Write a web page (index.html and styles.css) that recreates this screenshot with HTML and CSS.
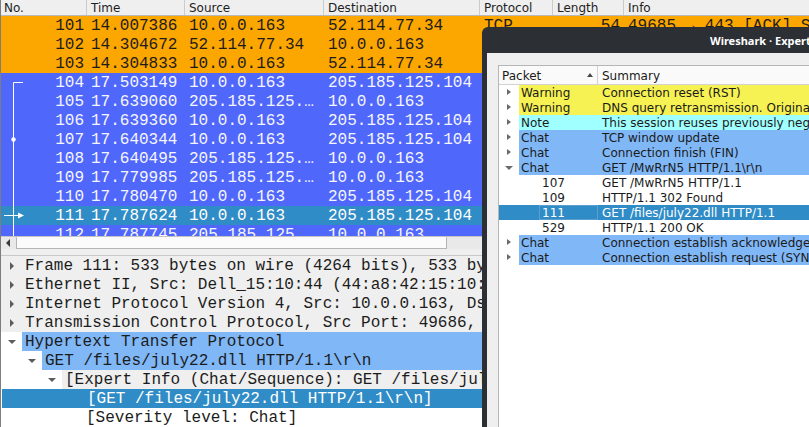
FILE: index.html
```html
<!DOCTYPE html>
<html>
<head>
<meta charset="utf-8">
<title>Wireshark</title>
<link rel="stylesheet" href="styles.css">
</head>
<body>
<div class="app">
  <div class="plist">
    <div class="phead">
      <div class="hc c-no">No.</div>
      <div class="hc c-time">Time</div>
      <div class="hc c-src">Source</div>
      <div class="hc c-dst">Destination</div>
      <div class="hc c-proto">Protocol</div>
      <div class="hc c-len">Length</div>
      <div class="hc c-info">Info</div>
    </div>
    <div class="prows">
      <svg class="related" width="30" height="220" viewBox="0 0 30 220">
        <path d="M12.5 66.5 V220 M12.5 66.5 H22 M3 199.5 H19" stroke="#fff" stroke-width="1" fill="none"/>
        <circle cx="12.5" cy="123.5" r="2.2" fill="#fff"/>
        <polygon points="17,196.5 23,199.5 17,202.5" fill="#fff"/>
      </svg>
      <div class="prow orange"><span class="c-no">101</span><span class="c-time">14.007386</span><span class="c-src">10.0.0.163</span><span class="c-dst">52.114.77.34</span><span class="c-proto">TCP</span><span class="c-len">54</span><span class="c-info">49685 → 443 [ACK] Seq=1 Ack=1 Win=1022 Len=0</span></div>
      <div class="prow orange"><span class="c-no">102</span><span class="c-time">14.304672</span><span class="c-src">52.114.77.34</span><span class="c-dst">10.0.0.163</span><span class="c-proto">TCP</span><span class="c-len">60</span><span class="c-info">443 → 49685 [ACK] Seq=1 Ack=2 Win=2050 Len=0</span></div>
      <div class="prow orange"><span class="c-no">103</span><span class="c-time">14.304833</span><span class="c-src">10.0.0.163</span><span class="c-dst">52.114.77.34</span><span class="c-proto">TCP</span><span class="c-len">54</span><span class="c-info">49685 → 443 [RST, ACK] Seq=2 Ack=2 Win=0 Len=0</span></div>
      <div class="prow blue"><span class="c-no">104</span><span class="c-time">17.503149</span><span class="c-src">10.0.0.163</span><span class="c-dst">205.185.125.104</span><span class="c-proto">TCP</span><span class="c-len">66</span><span class="c-info">49686 → 80 [SYN] Seq=0 Win=64240 Len=0</span></div>
      <div class="prow blue"><span class="c-no">105</span><span class="c-time">17.639060</span><span class="c-src">205.185.125.…</span><span class="c-dst">10.0.0.163</span><span class="c-proto">TCP</span><span class="c-len">66</span><span class="c-info">80 → 49686 [SYN, ACK] Seq=0 Ack=1 Win=64240</span></div>
      <div class="prow blue"><span class="c-no">106</span><span class="c-time">17.639360</span><span class="c-src">10.0.0.163</span><span class="c-dst">205.185.125.104</span><span class="c-proto">TCP</span><span class="c-len">54</span><span class="c-info">49686 → 80 [ACK] Seq=1 Ack=1 Win=262656</span></div>
      <div class="prow blue"><span class="c-no">107</span><span class="c-time">17.640344</span><span class="c-src">10.0.0.163</span><span class="c-dst">205.185.125.104</span><span class="c-proto">HTTP</span><span class="c-len">340</span><span class="c-info">GET /MwRrN5 HTTP/1.1</span></div>
      <div class="prow blue"><span class="c-no">108</span><span class="c-time">17.640495</span><span class="c-src">205.185.125.…</span><span class="c-dst">10.0.0.163</span><span class="c-proto">TCP</span><span class="c-len">60</span><span class="c-info">80 → 49686 [ACK] Seq=1 Ack=287 Win=64240</span></div>
      <div class="prow blue"><span class="c-no">109</span><span class="c-time">17.779985</span><span class="c-src">205.185.125.…</span><span class="c-dst">10.0.0.163</span><span class="c-proto">HTTP</span><span class="c-len">404</span><span class="c-info">HTTP/1.1 302 Found</span></div>
      <div class="prow blue"><span class="c-no">110</span><span class="c-time">17.780470</span><span class="c-src">10.0.0.163</span><span class="c-dst">205.185.125.104</span><span class="c-proto">TCP</span><span class="c-len">54</span><span class="c-info">49686 → 80 [ACK] Seq=287 Ack=351 Win=262306</span></div>
      <div class="prow sel"><span class="c-no">111</span><span class="c-time">17.787624</span><span class="c-src">10.0.0.163</span><span class="c-dst">205.185.125.104</span><span class="c-proto">HTTP</span><span class="c-len">533</span><span class="c-info">GET /files/july22.dll HTTP/1.1</span></div>
      <div class="prow blue"><span class="c-no">112</span><span class="c-time">17.787745</span><span class="c-src">205.185.125.…</span><span class="c-dst">10.0.0.163</span><span class="c-proto">TCP</span><span class="c-len">60</span><span class="c-info">80 → 49686 [ACK] Seq=351 Ack=766 Win=64240</span></div>
    </div>
    <div class="hscroll">
      <div class="sb-btn"><span class="sb-arrow"></span></div>
      <div class="sb-slider"></div>
      <div class="sb-trough"></div>
    </div>
  </div>
  <div class="splitter"></div>
  <div class="details">
    <div class="drow gray"><span class="tw closed"></span><span class="dt">Frame 111: 533 bytes on wire (4264 bits), 533 bytes captured (4264 bits) on interface 0</span></div>
    <div class="drow gray"><span class="tw closed"></span><span class="dt">Ethernet II, Src: Dell_15:10:44 (44:a8:42:15:10:44), Dst: Netgear_b6:93:f1</span></div>
    <div class="drow gray"><span class="tw closed"></span><span class="dt">Internet Protocol Version 4, Src: 10.0.0.163, Dst: 205.185.125.104</span></div>
    <div class="drow gray"><span class="tw closed"></span><span class="dt">Transmission Control Protocol, Src Port: 49686, Dst Port: 80, Seq: 287</span></div>
    <div class="drow"><span class="tw open"></span><span class="dt chat">Hypertext Transfer Protocol</span></div>
    <div class="drow l1"><span class="tw open"></span><span class="dt chat">GET /files/july22.dll HTTP/1.1\r\n</span></div>
    <div class="drow l2"><span class="tw open"></span><span class="dt grayhl">[Expert Info (Chat/Sequence): GET /files/july22.dll HTTP/1.1\r\n]</span></div>
    <div class="drow l3 dsel"><span class="tw"></span><span class="dt">[GET /files/july22.dll HTTP/1.1\r\n]</span></div>
    <div class="drow l3"><span class="tw"></span><span class="dt">[Severity level: Chat]</span></div>
  </div>
</div>

<div class="expert">
  <div class="titlebar">Wireshark · Expert Information</div>
  <div class="ebody">
    <div class="etable">
      <div class="ehead">
        <div class="eh-packet">Packet<span class="sort"></span></div>
        <div class="eh-sum">Summary</div>
      </div>
      <div class="erow"><span class="etw closed"></span><span class="band warn"><span class="lab">Warning</span><span class="sum">Connection reset (RST)</span></span></div>
      <div class="erow"><span class="etw closed"></span><span class="band warn"><span class="lab">Warning</span><span class="sum">DNS query retransmission. Original request in frame 24</span></span></div>
      <div class="erow"><span class="etw closed"></span><span class="band note"><span class="lab">Note</span><span class="sum">This session reuses previously negotiated keys (Session resumption)</span></span></div>
      <div class="erow"><span class="etw closed"></span><span class="band chat"><span class="lab">Chat</span><span class="sum">TCP window update</span></span></div>
      <div class="erow"><span class="etw closed"></span><span class="band chat"><span class="lab">Chat</span><span class="sum">Connection finish (FIN)</span></span></div>
      <div class="erow"><span class="etw open"></span><span class="band chat"><span class="lab">Chat</span><span class="sum">GET /MwRrN5 HTTP/1.1\r\n</span></span></div>
      <div class="erow child"><span class="espacer"></span><span class="clab">107</span><span class="sum">GET /MwRrN5 HTTP/1.1</span></div>
      <div class="erow child"><span class="espacer"></span><span class="clab">109</span><span class="sum">HTTP/1.1 302 Found</span></div>
      <div class="erow child esel"><span class="espacer"></span><span class="clab focus">111</span><span class="sum">GET /files/july22.dll HTTP/1.1</span></div>
      <div class="erow child"><span class="espacer"></span><span class="clab">529</span><span class="sum">HTTP/1.1 200 OK</span></div>
      <div class="erow"><span class="etw closed"></span><span class="band chat"><span class="lab">Chat</span><span class="sum">Connection establish acknowledge (SYN+ACK): server port 80</span></span></div>
      <div class="erow"><span class="etw closed"></span><span class="band chat"><span class="lab">Chat</span><span class="sum">Connection establish request (SYN): server port 80</span></span></div>
    </div>
  </div>
</div>
</body>
</html>
```

FILE: styles.css
```css
* { box-sizing: border-box; }
html, body { margin: 0; padding: 0; }
body {
  width: 809px;
  height: 427px;
  overflow: hidden;
  background: #ffffff;
  position: relative;
  font-family: "DejaVu Sans", sans-serif;
}

.app {
  display: flex;
  flex-direction: column;
  height: 427px;
  border-left: 1px solid #7d7d7d;
}

/* ---------- packet list ---------- */
.phead {
  display: flex;
  height: 16px;
  background: #efefef;
  border-bottom: 1px solid #b9b9b9;
  font-size: 12px;
  line-height: 16px;
  color: #1e1e1e;
}
.hc {
  padding-left: 3px;
  border-right: 1px solid #cbcbcb;
  white-space: nowrap;
  overflow: hidden;
}
.phead .c-time, .phead .c-src, .phead .c-dst, .phead .c-proto, .phead .c-len, .phead .c-info { padding-left: 4px; }

.c-no { width: 86px; flex: none; }
.c-time { width: 98px; flex: none; }
.c-src { width: 139px; flex: none; }
.c-dst { width: 156px; flex: none; }
.c-proto { width: 73px; flex: none; }
.c-len { width: 71px; flex: none; }
.c-info { flex: 1; border-right: none; }

.prows {
  position: relative;
  height: 220px;
  overflow: hidden;
}
.related {
  position: absolute;
  left: 0;
  top: 0;
}
.prow {
  display: flex;
  height: 19px;
  padding-top: 2px;
  font-family: "Liberation Mono", monospace;
  font-size: 16px;
  line-height: 17px;
  white-space: nowrap;
}
.prow > span { overflow: hidden; white-space: nowrap; }
.prow .c-no { text-align: right; padding-right: 3px; }
.prow .c-time, .prow .c-src, .prow .c-dst, .prow .c-proto { padding-left: 4px; }
.prow .c-len { text-align: right; padding-right: 4px; }
.prow .c-info { padding-left: 4px; }

.orange { background: #fca600; color: #1c1c1c; }
.blue { background: #5067fb; color: #f6f6ff; }
.sel { background: #308cc6; color: #ffffff; }

.hscroll {
  display: flex;
  height: 13px;
  background: #e9e9e9;
  border-top: 1px solid #c4c4c4;
}
.sb-btn {
  width: 15px;
  display: flex;
  align-items: center;
  justify-content: center;
}
.sb-arrow {
  width: 0;
  height: 0;
  border-right: 4px solid #3a3a3a;
  border-top: 4px solid transparent;
  border-bottom: 4px solid transparent;
  margin-left: -2px;
}
.sb-slider {
  width: 431px;
  background: #fbfbfb;
  border: 1px solid #b4b4b4;
  border-top: none;
  border-radius: 1px;
}
.sb-trough { flex: 1; }

.splitter {
  height: 8px;
  background: #efefef;
  border-bottom: 1px solid #c9c9c9;
}

/* ---------- details ---------- */
.details {
  flex: 1;
  font-family: "Liberation Mono", monospace;
  font-size: 16px;
  color: #1c1c1c;
}
.drow {
  display: flex;
  height: 19px;
  line-height: 19px;
  white-space: nowrap;
}
.drow.l1 { padding-left: 20px; }
.drow.l2 { padding-left: 40px; }
.drow.l3 { padding-left: 60px; }
.drow.gray { background: #efefef; }
.tw {
  width: 21px;
  flex: none;
  position: relative;
}
.tw.closed::before {
  content: "";
  position: absolute;
  left: 9px;
  top: 6px;
  border-left: 4px solid #5c5c5c;
  border-top: 4px solid transparent;
  border-bottom: 4px solid transparent;
}
.tw.open::before {
  content: "";
  position: absolute;
  left: 7px;
  top: 8px;
  border-top: 4px solid #5c5c5c;
  border-left: 4px solid transparent;
  border-right: 4px solid transparent;
}
.dt {
  flex: 1;
  padding-left: 3px;
  padding-top: 1px;
  overflow: hidden;
}
.drow.l3 .dt { padding-left: 4px; }
.dt.chat { background: #80b7f7; }
.dt.grayhl { background: #efefef; }
.dsel { background: #308cc6; color: #ffffff; margin-left: 1px; }

/* ---------- expert info window ---------- */
.expert {
  position: absolute;
  left: 482px;
  top: 27px;
  width: 340px;
  height: 410px;
  background: #2c2f34;
  border-radius: 6px 6px 0 0;
  padding-left: 5px;
  display: flex;
  flex-direction: column;
}
.titlebar {
  height: 26px;
  flex: none;
  color: #ffffff;
  font-family: "Noto Sans", sans-serif;
  font-weight: bold;
  font-size: 11px;
  line-height: 27px;
  padding-left: 223px;
  white-space: nowrap;
  overflow: hidden;
}
.ebody {
  flex: 1;
  background: #efefef;
  padding: 12px 0 0 11px;
}
.etable {
  height: 100%;
  background: #ffffff;
  border: 1px solid #b6b6b6;
  border-right: none;
  font-family: "DejaVu Sans", sans-serif;
  font-size: 12px;
  color: #1b1b1b;
}
.ehead {
  display: flex;
  height: 19px;
  background: #fafafa;
  border-bottom: 1px solid #d2d2d2;
  line-height: 20px;
}
.eh-packet {
  width: 99px;
  flex: none;
  padding-left: 3px;
  border-right: 1px solid #d2d2d2;
  position: relative;
}
.sort {
  position: absolute;
  left: 88px;
  top: 7px;
  border-bottom: 4px solid #4a4a4a;
  border-left: 3.5px solid transparent;
  border-right: 3.5px solid transparent;
}
.eh-sum { flex: 1; padding-left: 4px; }

.erow {
  display: flex;
  height: 15px;
  line-height: 17px;
  white-space: nowrap;
}
.etw {
  width: 20px;
  flex: none;
  position: relative;
}
.etw.closed::before {
  content: "";
  position: absolute;
  left: 8px;
  top: 4px;
  border-left: 4px solid #6a6a6a;
  border-top: 3.5px solid transparent;
  border-bottom: 3.5px solid transparent;
}
.etw.open::before {
  content: "";
  position: absolute;
  left: 6px;
  top: 6px;
  border-top: 4px solid #6a6a6a;
  border-left: 4px solid transparent;
  border-right: 4px solid transparent;
}
.band {
  flex: 1;
  display: flex;
}
.band.warn { background: #f7f253; }
.band.note { background: #a0ffff; }
.band.chat { background: #80b7f7; }
.lab {
  width: 79px;
  flex: none;
  padding-left: 2px;
}
.sum {
  flex: 1;
  padding-left: 4px;
  overflow: hidden;
}
.espacer { width: 40px; flex: none; }
.clab {
  width: 59px;
  flex: none;
  padding-left: 3px;
}
.esel { background: #308cc6; color: #ffffff; }
.clab.focus {
  border: 1px solid #5b9fce;
  padding-left: 2px;
  line-height: 15px;
}
```
